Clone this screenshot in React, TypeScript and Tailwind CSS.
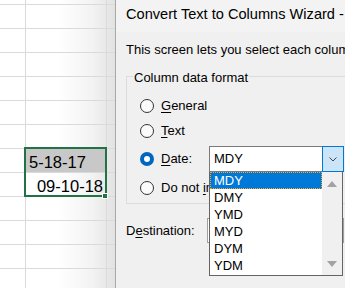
import React from "react";

const rows = Array.from({ length: 12 }, (_, i) => i + 1);
const formats = ["MDY", "DMY", "YMD", "MYD", "DYM", "YDM"];

function Radio({ checked = false }: { checked?: boolean }) {
  if (checked) {
    return (
      <span className="flex size-[14px] shrink-0 items-center justify-center rounded-full bg-[#0067c0]">
        <span className="size-[6px] rounded-full bg-white" />
      </span>
    );
  }
  return <span className="size-[14px] shrink-0 rounded-full border border-[#333] bg-[#fbfbfb]" />;
}

function Sheet() {
  return (
    <div className="relative flex w-[115px] shrink-0 flex-col bg-[linear-gradient(to_right,#ffffff_50%,#f3f3f3_80%,#e2e2e2_100%)] font-['Liberation_Sans',sans-serif] text-[16.5px] leading-[18px] text-black">
      <div className="flex h-[5px] shrink-0 border-b border-[#dadada]">
        <div className="w-[26px] border-r border-[#dadada]" />
        <div className="w-[81px] border-r border-[#dadada]" />
      </div>
      {rows.map((r) => (
        <div key={r} className="flex h-[24px] shrink-0 border-b border-[#dadada]">
          <div className="w-[26px] border-r border-[#dadada]" />
          {r === 7 ? (
            <div className="flex w-[81px] items-end border-r border-[#dadada] bg-[#c8c8c8] pb-[1px] pl-[3px]">5-18-17</div>
          ) : r === 8 ? (
            <div className="flex w-[81px] items-end justify-end border-r border-[#dadada] pb-[1px] pr-[3px]">09-10-18</div>
          ) : (
            <div className="w-[81px] border-r border-[#dadada]" />
          )}
        </div>
      ))}
      <div className="absolute left-[24px] top-[147px] h-[50px] w-[83px] border-2 border-[#217346]" />
      <div className="absolute left-[102px] top-[193px] size-[6px] border border-white bg-[#217346]" />
    </div>
  );
}

export default function App() {
  return (
    <div className="flex h-[288px] w-[345px] overflow-hidden bg-white">
      <Sheet />
      <div className="flex w-[420px] shrink-0 flex-col border-l border-[#a8a8a8] bg-[#f0f0f0] font-['Liberation_Sans',sans-serif] text-black">
        <div className="h-[32px] shrink-0 whitespace-nowrap bg-[#f3f3f3] pl-[10px] pt-[5px] text-[14.6px] leading-[18px]">
          Convert Text to Columns Wizard - Step 3 of 3
        </div>
        <div className="flex flex-1 flex-col pl-[10px] pt-[10px] text-[13px] leading-[16px]">
          <p className="whitespace-nowrap">This screen lets you select each column and set the Data Format.</p>

          <div className="relative mt-[18px] h-[128px] w-[320px] shrink-0 border border-[#dcdcdc]">
            <span className="absolute left-[6px] top-[-7px] bg-[#f0f0f0] px-[1px]">Column data format</span>
            <div className="flex flex-col pl-[13px] pt-[19px]">
              <div className="flex h-[20px] items-center">
                <Radio />
                <span className="ml-[7px]"><u className="underline-offset-2">G</u>eneral</span>
              </div>
              <div className="mt-[5px] flex h-[20px] items-center">
                <Radio />
                <span className="ml-[7px]"><u className="underline-offset-2">T</u>ext</span>
              </div>
              <div className="mt-[5px] flex h-[26px] items-center">
                <Radio checked />
                <span className="ml-[7px] w-[48px]"><u className="underline-offset-2">D</u>ate:</span>
                <div className="relative z-10 flex h-[26px] w-[135px]">
                  <div className="flex flex-1 items-center border-y border-l border-[#7a7a7a] bg-white pl-[4px]">MDY</div>
                  <div className="flex w-[22px] items-center justify-center border border-[#0078d7] bg-[#cce4f7]">
                    <svg width="8" height="5" viewBox="0 0 8 5">
                      <path d="M0.5 0.5 L4 4 L7.5 0.5" fill="none" stroke="#444" strokeWidth="1" />
                    </svg>
                  </div>
                  <div className="absolute left-0 top-[26px] flex h-[104px] w-[134px] border-x border-b border-[#646464] bg-white">
                    <div className="flex flex-1 flex-col">
                      {formats.map((f, i) =>
                        i === 0 ? (
                          <div key={f} className="h-[17px] border border-dotted border-[#f5a623] bg-[#0078d7] pl-[3px] leading-[15px] text-white">
                            {f}
                          </div>
                        ) : (
                          <div key={f} className="h-[17px] pl-[4px] leading-[17px]">
                            {f}
                          </div>
                        )
                      )}
                    </div>
                    <div className="flex w-[20px] flex-col items-center justify-between bg-[#f0f0f0] pb-[8px] pt-[9px]">
                      <svg width="10" height="6" viewBox="0 0 10 6">
                        <polygon points="5,0 10,6 0,6" fill="#a3a3a3" />
                      </svg>
                      <svg width="10" height="6" viewBox="0 0 10 6">
                        <polygon points="0,0 10,0 5,6" fill="#a3a3a3" />
                      </svg>
                    </div>
                  </div>
                </div>
              </div>
              <div className="mt-[6px] flex h-[20px] items-center">
                <Radio />
                <span className="ml-[7px] whitespace-nowrap">Do not <u className="underline-offset-2">i</u>mport column (skip)</span>
              </div>
            </div>
          </div>

          <div className="mt-[14px] flex h-[25px] items-center">
            <span className="w-[81px]">D<u className="underline-offset-2">e</u>stination:</span>
            <div className="h-[25px] w-[137px] border border-[#a0a0a0] bg-white" />
          </div>
        </div>
      </div>
    </div>
  );
}
